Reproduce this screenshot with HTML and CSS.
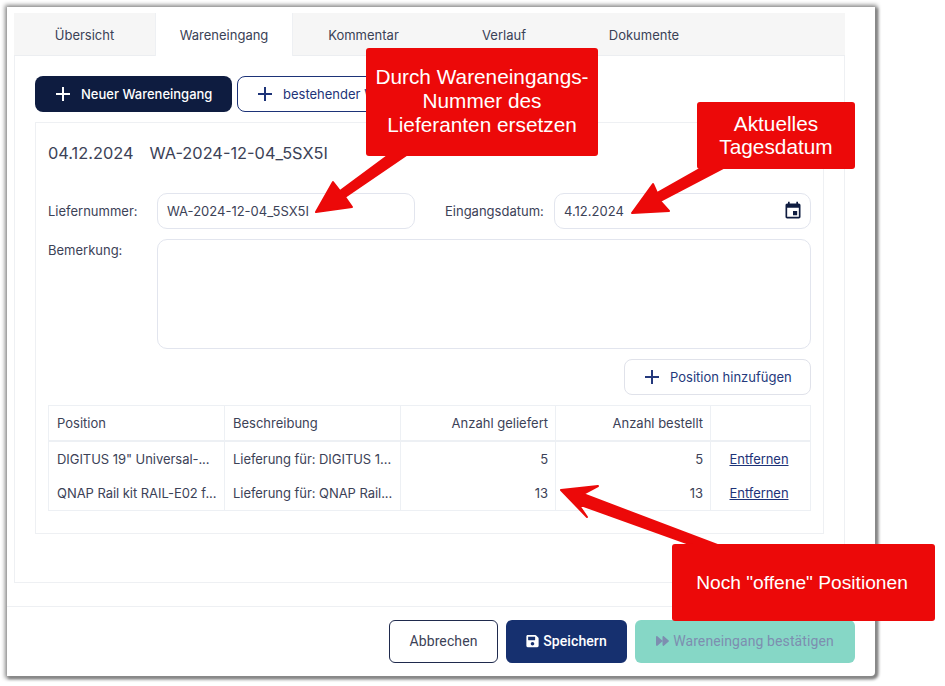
FILE: index.html
```html
<!DOCTYPE html>
<html lang="de">
<head>
<meta charset="utf-8">
<title>Wareneingang</title>
<link rel="stylesheet" href="styles.css">
</head>
<body>
<div class="window">
  <div class="panel">
    <nav class="tabs">
      <div class="tab">Übersicht</div>
      <div class="tab active">Wareneingang</div>
      <div class="tab">Kommentar</div>
      <div class="tab">Verlauf</div>
      <div class="tab">Dokumente</div>
    </nav>
    <div class="tab-body">
      <div class="actions">
        <button class="btn btn-primary"><svg class="plus" viewBox="0 0 16 16"><path d="M8 1v14M1 8h14"/></svg>Neuer Wareneingang</button>
        <button class="btn btn-outline"><svg class="plus" viewBox="0 0 16 16"><path d="M8 1v14M1 8h14"/></svg>bestehender Wareneingang</button>
      </div>
      <section class="card">
        <h2 class="title"><span>04.12.2024</span><span>WA-2024-12-04_5SX5I</span></h2>
        <div class="row">
          <label class="lbl">Liefernummer:</label>
          <div class="field f-num">WA-2024-12-04_5SX5I</div>
          <label class="lbl lbl-date">Eingangsdatum:</label>
          <div class="field f-date">4.12.2024
            <svg class="cal" viewBox="0 0 24 24"><path d="M17 12h-5v5h5v-5zM16 1v2H8V1H6v2H5c-1.11 0-1.99.9-1.99 2L3 19c0 1.1.89 2 2 2h14c1.1 0 2-.9 2-2V5c0-1.1-.9-2-2-2h-1V1h-2zm3 18H5V8h14v11z"/></svg>
          </div>
        </div>
        <div class="row row-note">
          <label class="lbl">Bemerkung:</label>
          <div class="field note"></div>
        </div>
        <div class="add-row">
          <button class="btn btn-add"><svg class="plus" viewBox="0 0 16 16"><path d="M8 1v14M1 8h14"/></svg>Position hinzufügen</button>
        </div>
        <table class="grid">
          <colgroup><col class="c1"><col class="c2"><col class="c3"><col class="c4"><col class="c5"></colgroup>
          <thead>
            <tr><th>Position</th><th>Beschreibung</th><th class="num">Anzahl geliefert</th><th class="num">Anzahl bestellt</th><th></th></tr>
          </thead>
          <tbody>
            <tr><td>DIGITUS 19" Universal-...</td><td>Lieferung für: DIGITUS 1...</td><td class="num">5</td><td class="num">5</td><td class="act"><a href="#">Entfernen</a></td></tr>
            <tr><td>QNAP Rail kit RAIL-E02 f...</td><td>Lieferung für: QNAP Rail...</td><td class="num">13</td><td class="num">13</td><td class="act"><a href="#">Entfernen</a></td></tr>
          </tbody>
        </table>
      </section>
    </div>
  </div>
  <footer class="footer">
    <button class="fbtn f-cancel">Abbrechen</button>
    <button class="fbtn f-save"><svg class="fa" viewBox="0 0 448 512"><path d="M433.941 129.941l-83.882-83.882A48 48 0 0 0 316.118 32H48C21.49 32 0 53.49 0 80v352c0 26.51 21.49 48 48 48h352c26.51 0 48-21.49 48-48V163.882a48 48 0 0 0-14.059-33.941zM224 416c-35.346 0-64-28.654-64-64 0-35.346 28.654-64 64-64s64 28.654 64 64c0 35.346-28.654 64-64 64zm96-304.52V212c0 6.627-5.373 12-12 12H76c-6.627 0-12-5.373-12-12V108c0-6.627 5.373-12 12-12h228.52c3.183 0 6.235 1.264 8.485 3.515l3.48 3.48A11.996 11.996 0 0 1 320 111.48z"/></svg>Speichern</button>
    <button class="fbtn f-confirm"><svg class="fa" viewBox="0 0 512 512"><path d="M500.5 231.4l-192-160C287.9 53.3 256 68.6 256 96v320c0 27.4 31.9 42.8 52.5 24.6l192-160c15.3-12.8 15.3-36.4 0-49.2zm-256 0l-192-160C31.9 53.3 0 68.6 0 96v320c0 27.4 31.9 42.8 52.5 24.6l192-160c15.3-12.8 15.3-36.4 0-49.2z"/></svg>Wareneingang bestätigen</button>
  </footer>
</div>
<svg class="arrows" viewBox="0 0 945 686">
  <polygon points="390,154 408,154 345,197 352,207 316,212 333,182 340,191"/>
  <polygon points="703,167 725,167 660,201 669,211 632,213 653,184 657,193"/>
  <polygon points="720,546 695,546 578,504 587,517 561,490 598,486 583,494"/>
</svg>
<div class="callout c-a">Durch Wareneingangs-<br>Nummer des<br>Lieferanten ersetzen</div>
<div class="callout c-b">Aktuelles<br>Tagesdatum</div>
<div class="callout c-c">Noch "offene" Positionen</div>
</body>
</html>
```
FILE: styles.css
```css
* { box-sizing: border-box; }
html, body { margin: 0; height: 686px; overflow: hidden; background: #fff; }
body { position: relative; font-family: Inter, "Noto Sans", sans-serif; font-size: 13px; color: #3c4257; }

.window {
  margin: 7px 0 0 7px;
  width: 868px;
  height: 669px;
  background: #fff;
  box-shadow: 0 0 4px 2px #8c8c8c, 2px 2px 3px 1px #777;
  padding: 6px 30px 0 7px;
  display: flex;
  flex-direction: column;
  border-bottom-right-radius: 4px;
}
.panel { height: 570px; width: 831px; border: 1px solid #eef0f3; border-top: 0; flex: none; }
.tabs { display: flex; height: 43px; margin: 0 -1px; background: #f6f6f6; border-bottom: 1px solid #eceef1; }
.tab { width: 140px; display: flex; align-items: center; justify-content: center; color: #3a4256; padding-top: 1px; }
.tab:first-child, .active + .tab { width: 141px; }
.tab.active { background: #fff; height: 43px; width: 138px; border: 1px solid #eef0f3; border-width: 0 1px; }
.tab-body { padding: 20px 20px 0 20px; }

.actions { display: flex; gap: 5px; height: 36px; }
.btn { font: inherit; display: inline-flex; align-items: center; border-radius: 8px; height: 36px; white-space: nowrap; cursor: pointer; }
.plus { width: 16px; height: 16px; flex: none; margin-right: 10px; fill: none; stroke: currentColor; stroke-width: 2; }
.btn-primary { width: 197px; padding: 0 0 0 20px; background: #0e1c40; border: 0; color: #fff; font-weight: 500; }
.btn-outline { width: 240px; padding: 0 0 0 19px; background: #fff; border: 1px solid #1d3378; color: #1d3378; }

.card { margin-top: 10px; width: 789px; height: 412px; border: 1px solid #eef0f3; padding: 0 12px; }
.title { margin: 0; height: 70px; padding-top: 20px; font-size: 16.35px; line-height: 20px; font-weight: 400; color: #3c4257; display: flex; gap: 16px; }
.row { display: flex; align-items: center; height: 36px; }
.row-note { align-items: flex-start; margin-top: 10px; height: 110px; }
.lbl { width: 109px; flex: none; color: #3c4257; }
.lbl-date { width: 109px; margin-left: 30px; }
.row-note .lbl { padding-top: 3px; }
.field { border: 1px solid #e2e5ee; border-radius: 10px; height: 36px; padding: 0 9px; display: flex; align-items: center; background: #fff; color: #3c4257; }
.f-num { width: 258px; }
.f-date { width: 257px; position: relative; justify-content: space-between; }
.cal { width: 20px; height: 20px; fill: #0e1c40; margin-right: -2px; }
.note { width: 654px; height: 110px; }
.add-row { display: flex; justify-content: flex-end; margin-top: 10px; height: 36px; }
.btn-add { width: 187px; padding: 0 0 0 19px; background: #fff; border: 1px solid #e0e2ea; color: #24397c; }

.grid { margin-top: 10px; width: 763px; table-layout: fixed; border-collapse: collapse; border: 1px solid #edf0f4; }
.c1, .c2 { width: 176px; }
.c3, .c4 { width: 155px; }
.grid th, .grid td { padding: 0 7px 0 8px; font-weight: 400; text-align: left; white-space: nowrap; border-left: 1px solid #edf0f4; color: #3c4257; }
.grid th { height: 35px; border-bottom: 2px solid #edf0f4; }
.grid td { height: 35px; padding-top: 1px; letter-spacing: -0.05px; }
.grid .num { text-align: right; }
.grid .act { text-align: center; padding-left: 6px; padding-right: 9px; }
.grid a { color: #1d3378; }

.footer { margin: 23px -30px 0 -7px; height: 63px; border-top: 1px solid #eef0f3; display: flex; justify-content: flex-end; gap: 8px; padding: 13px 20px 0 0; }
.fbtn { font-family: Roboto, sans-serif; font-size: 14px; letter-spacing: 0.1px; height: 43px; border-radius: 6px; border: 0; padding: 0 0 2px; display: flex; align-items: center; justify-content: center; cursor: pointer; }
.fa { width: 13px; height: 14px; margin-right: 4px; fill: currentColor; }
.f-cancel { width: 109px; background: #fff; border: 1px solid #1f2a4d; color: #3c4257; }
.f-save { width: 121px; background: #16306f; color: #fff; font-weight: 500; }
.f-confirm { width: 220px; background: #86d7c6; color: #7d8eb0; }

.arrows { position: absolute; left: 0; top: 0; width: 945px; height: 686px; pointer-events: none; }
.arrows polygon { fill: #ec0909; stroke: #ec0909; stroke-width: 2; stroke-linejoin: round; }
.callout { position: absolute; background: #ec0909; color: #fff; border-radius: 3px; font-family: "Liberation Sans", Arial, sans-serif; font-size: 20.8px; line-height: 24px; text-align: center; display: flex; align-items: center; justify-content: center; }
.c-a { left: 366px; top: 48px; width: 232px; height: 108px; padding: 0 0 2px; }
.c-b { left: 697px; top: 102px; width: 158px; height: 67px; padding: 0 0 2px; line-height: 23px; }
.c-c { left: 672px; top: 544px; width: 263px; height: 77px; padding: 0 3px 0 0; font-size: 19.2px; }
```
